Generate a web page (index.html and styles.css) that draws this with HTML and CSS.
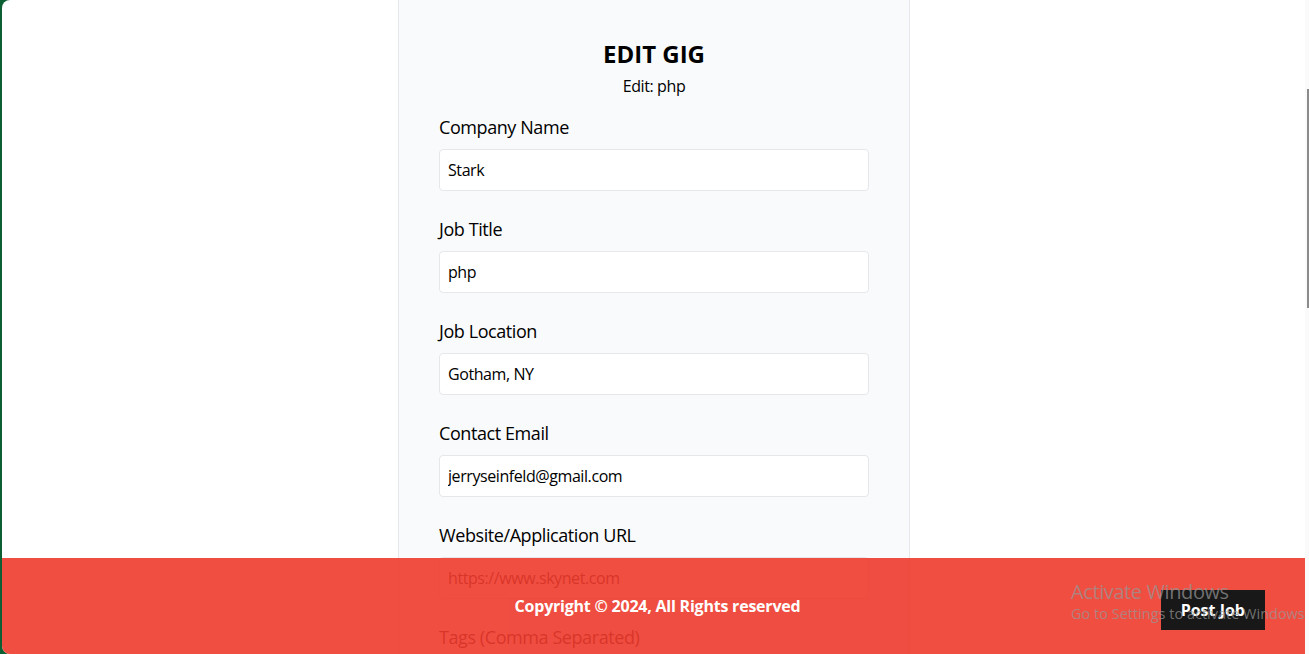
FILE: index.html
```html
<!DOCTYPE html>
<html lang="en">
<head>
<meta charset="utf-8">
<title>Edit Gig</title>
<link rel="stylesheet" href="styles.css">
</head>
<body>
<div class="viewport">
  <main class="page">
    <div class="card">
      <header class="card-head">
        <h2 class="card-title">Edit Gig</h2>
        <p class="card-sub">Edit: php</p>
      </header>
      <form class="form">
        <div class="group">
          <label class="label" for="company">Company Name</label>
          <input class="input" id="company" type="text" value="Stark">
        </div>
        <div class="group">
          <label class="label" for="title">Job Title</label>
          <input class="input" id="title" type="text" value="php">
        </div>
        <div class="group">
          <label class="label" for="location">Job Location</label>
          <input class="input" id="location" type="text" value="Gotham, NY">
        </div>
        <div class="group">
          <label class="label" for="email">Contact Email</label>
          <input class="input" id="email" type="text" value="jerryseinfeld@gmail.com">
        </div>
        <div class="group">
          <label class="label" for="website">Website/Application URL</label>
          <input class="input" id="website" type="text" value="https://www.skynet.com">
        </div>
        <div class="group">
          <label class="label" for="tags">Tags (Comma Separated)</label>
          <input class="input" id="tags" type="text" value="laravel, api, backend">
        </div>
      </form>
    </div>
  </main>
  <footer class="footer">
    <p class="copyright">Copyright &copy; 2024, All Rights reserved</p>
    <a class="post-job" href="#">Post Job</a>
  </footer>
  <div class="watermark">
    <div class="wm-title">Activate Windows</div>
    <div class="wm-sub">Go to Settings to activate Windows.</div>
  </div>
</div>
<div class="scrollbar"><div class="thumb"></div></div>
</body>
</html>
```
FILE: styles.css
```css
* { box-sizing: border-box; }
html, body { margin: 0; padding: 0; }
body {
  display: flex;
  height: 654px;
  overflow: hidden;
  background: #0c5e33;
  padding-left: 2px;
  font-family: "Open Sans", "Noto Sans", sans-serif;
  color: #000;
}
.viewport {
  position: relative;
  width: 1303px;
  height: 654px;
  overflow: hidden;
  background: #fff;
  border-radius: 8px 0 0 8px;
}
.page {
  display: flex;
  justify-content: center;
  padding-left: 1px;
}
.card {
  width: 512px;
  background: #f9fafb;
  border: 1px solid #e5e7eb;
  border-top: none;
  padding: 38px 40px 40px;
}
.card-head { text-align: center; }
.card-title {
  margin: 0 0 4px;
  font-size: 24px;
  line-height: 32px;
  font-weight: 700;
  text-transform: uppercase;
}
.card-sub {
  margin: 0 0 15px;
  font-size: 16px;
  line-height: 24px;
  letter-spacing: -0.4px;
}
.form { display: flex; flex-direction: column; gap: 24px; }
.group { display: flex; flex-direction: column; gap: 8px; }
.label {
  font-size: 18px;
  line-height: 28px;
  letter-spacing: -0.42px;
}
.input {
  height: 42px;
  padding: 8px;
  border: 1px solid #e5e7eb;
  border-radius: 4px;
  background: #fff;
  font: inherit;
  font-size: 16px;
  line-height: 24px;
  letter-spacing: -0.42px;
  color: #000;
}
.footer {
  position: absolute;
  left: 0;
  bottom: 0;
  width: 100%;
  height: 96px;
  display: flex;
  align-items: center;
  justify-content: center;
  background: #ef3b2d;
  color: #fff;
  font-weight: 700;
  opacity: 0.9;
}
.copyright {
  margin: 0 0 0 8px;
  font-size: 16px;
  line-height: 24px;
  letter-spacing: -0.22px;
}
.post-job {
  position: absolute;
  top: 32px;
  right: 40px;
  background: #000;
  color: #fff;
  text-decoration: none;
  padding: 8px 20px;
  font-size: 16px;
  line-height: 24px;
}
.watermark {
  position: absolute;
  left: 1069px;
  top: 580px;
  color: rgba(150, 150, 150, 0.72);
  pointer-events: none;
  white-space: nowrap;
}
.wm-title { font-size: 20px; line-height: 24px; letter-spacing: -0.4px; }
.wm-sub { font-size: 14.5px; line-height: 20px; }
.scrollbar {
  width: 4px;
  height: 654px;
  background: #fafafa;
  padding-top: 89px;
  padding-left: 2px;
}
.thumb {
  width: 2px;
  height: 219px;
  background: #8b8b8b;
}
```
